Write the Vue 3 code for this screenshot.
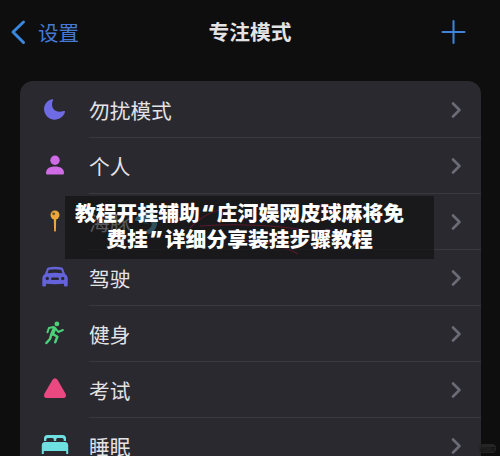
<script setup>
const rows = [
  { name: '勿扰模式', icon: 'moon' },
  { name: '个人', icon: 'person' },
  { name: '海豚', icon: 'pin', emoji: true },
  { name: '驾驶', icon: 'car' },
  { name: '健身', icon: 'run' },
  { name: '考试', icon: 'triangle' },
  { name: '睡眠', icon: 'bed' },
]
</script>

<template>
  <main class="screen">
    <header class="bar">
      <div class="back">
        <svg width="16" height="26" viewBox="0 0 16 26"><path d="M13.500 3 3 13 13.500 23.500" /></svg>
        <span>设置</span>
      </div>
      <h1>专注模式</h1>
      <svg class="plus" width="26" height="26" viewBox="0 0 26 26"><path d="M12.500 2v22M1.500 13h22" /></svg>
    </header>

    <section class="card">
      <div v-for="row in rows" :key="row.name" class="row">
        <svg class="icon" width="30" height="30" viewBox="0 0 30 30">
          <path v-if="row.icon === 'moon'" fill="#6e6be4" d="M12 4.3C3.5 6.4 1.6 16 7.3 21.700c5.700 5.500 15.500 3 17.700-4.600.3-1-.5-1.400-1.400-1C15.500 19 9.500 12.500 13 5.300c.4-.8-.1-1.200-1-1z" />
          <g v-else-if="row.icon === 'person'" fill="#d06be6">
            <circle cx="15" cy="9.300" r="4.700" />
            <path d="M6 22c0-4.500 4-6.500 9-6.500s9 2 9 6.500c0 1-.6 1.600-1.600 1.600H7.600C6.600 23.600 6 23 6 22z" />
          </g>
          <g v-else-if="row.icon === 'pin'" fill="#eaa83a">
            <circle cx="15" cy="8" r="4.500" />
            <path d="M13.800 12h2.400l-.3 11.500-.9 1.800-.9-1.800z" />
            <circle cx="13.700" cy="6.800" r="1.400" fill="#675036" />
          </g>
          <g v-else-if="row.icon === 'car'">
            <path fill="#6563dc" fill-rule="evenodd" d="M8.200 4.600Q15 3 21.800 4.600q1 .3 1.400 1.300l1.900 5.200q2.600 1.500 2.600 4.200v7q0 1.200-1.200 1.200h-1.300q-1.200 0-1.200-1.200v-1.500q-9 .7-18 0v1.500q0 1.200-1.200 1.200H3.500q-1.200 0-1.200-1.200v-7q0-2.700 2.600-4.200l1.900-5.200q.4-1 1.400-1.300zM8.800 6.800 7.500 10.300q7.500-.9 15 0L21.200 6.800Q15 5.800 8.800 6.800z" />
            <circle cx="7.300" cy="15.500" r="1.700" fill="#2a2930" /><circle cx="22.700" cy="15.500" r="1.700" fill="#2a2930" />
            <rect x="11" y="14.500" width="8" height="2.400" rx="1.200" fill="#2a2930" />
          </g>
          <g v-else-if="row.icon === 'run'" fill="none" stroke="#4bd279" stroke-linecap="round" stroke-linejoin="round">
            <circle cx="16.900" cy="4.900" r="2.400" fill="#4bd279" stroke="none" />
            <path stroke-width="2" d="m13.500 8-4.600 1-1.400 4.300M16 10l2.300 3 4.600-2" />
            <path stroke-width="3.800" d="m14.500 9.500-2.200 5.300" />
            <path stroke-width="2.500" d="m12.800 15 4.600 2.800-2.200 5.500M11.300 15.500l-1.300 4.500-3.600 4" />
          </g>
          <path v-else-if="row.icon === 'triangle'" fill="#e94880" d="M12.500 4.800q2.500-3.200 5 0l8.100 14q1.500 4.100-2.500 4.200H6.900q-4-.1-2.500-4.200z" />
          <g v-else fill="#6fe0e2">
            <path d="M4 10V7.500Q4 4 7.500 4h15Q26 4 26 7.500V10h-2.300V8.500q0-1.500-1.500-1.500H17.500q-1.300 0-1.300 1.500V10h-2.400V8.500q0-1.500-1.300-1.500H7.800q-1.500 0-1.500 1.500V10z" />
            <path d="M1.800 23v-8.500Q1.800 11 5 11h20q3.200 0 3.200 3.500V23h-2v-3H3.800v3z" />
          </g>
        </svg>
        <div class="content">
          <span class="label">{{ row.name }}</span>
          <svg v-if="row.emoji" class="dolphin" width="26" height="26" viewBox="0 0 26 26">
            <path fill="#6ccbf0" d="M2 10Q7 2 16 3l4-2-1 4q6 4 5 11-2 7-8 9l-5-2 5-3q5-4 1-8-5-3-12 0-4 0-3-2z" />
            <path fill="#3f80b8" d="M8 10q5 1 7 5l-5-1z" />
          </svg>
          <svg class="chevron" width="12" height="18" viewBox="0 0 12 18"><path d="m3 2.500 6.500 6.500L3 15.500" /></svg>
        </div>
      </div>
    </section>

    <div class="banner">
      <svg class="marks" width="369" height="63" viewBox="0 0 369 63">
        <path d="M125 32q18-19 45-21M135 30q60-4 110 5M175 44q37 2 58 14" />
      </svg>
      <p>教程开挂辅助<i>“</i>庄河娱网皮球麻将免</p>
      <p>费挂<i>”</i>详细分享装挂步骤教程</p>
    </div>
    <div class="tag">创信网</div>
  </main>
</template>

<style>
body { background: #0e0e0e; overflow: hidden; }
</style>

<style scoped>
.screen {
  position: relative;
  width: 500px;
  height: 456px;
  overflow: hidden;
  background: #0e0e0e;
  color: #e3e3e6;
  font-family: "Noto Sans CJK SC", sans-serif;
}
.bar {
  display: grid;
  grid-template-columns: 1fr auto 1fr;
  align-items: center;
  height: 63px;
  padding: 0 33px 0 10px;
  box-sizing: border-box;
}
.back { display: flex; align-items: center; gap: 12px; color: #4679d6; font-size: 20.500px; line-height: 28px; }
.back path { fill: none; stroke: #3788de; stroke-width: 3; stroke-linecap: round; stroke-linejoin: round; }
h1 { margin: 0 0 2px 23px; font-size: 20.700px; line-height: 28px; font-weight: 700; }
.plus { justify-self: end; }
.plus path { stroke: #3f83dc; stroke-width: 2; stroke-linecap: round; }
.card {
  margin: 18px 19px 0 20px;
  height: 400px;
  padding-top: 1px;
  box-sizing: border-box;
  border-radius: 13px 13px 0 0;
  background: #2a2930;
}
.row { display: flex; align-items: center; height: 56px; padding-left: 20px; }
.icon { flex: none; margin-right: 19px; }
.content {
  display: flex;
  align-items: center;
  flex: 1;
  height: 56px;
  padding-right: 19px;
  box-sizing: border-box;
  border-bottom: 1px solid #3a3940;
}
.label { font-size: 20.700px; line-height: 30px; }
.dolphin { margin-left: 3px; }
.chevron { margin-left: auto; }
.chevron path { fill: none; stroke: #6b6b76; stroke-width: 2.600; stroke-linecap: round; stroke-linejoin: round; }
.banner {
  position: absolute;
  left: 65px;
  top: 196px;
  width: 369px;
  height: 63px;
  padding-top: 3px;
  box-sizing: border-box;
  background: rgba(16, 16, 17, 0.660);
}
.banner p {
  position: relative;
  margin: 0;
  padding-right: 20px;
  height: 26px;
  color: #fff;
  font-size: 20.800px;
  line-height: 26px;
  font-weight: 900;
  text-align: center;
  white-space: nowrap;
}
.banner i {
  display: inline-block;
  width: 17px;
  line-height: 20px;
  font-style: normal;
  font-size: 23px;
  font-family: "Noto Sans", sans-serif;
}
.marks { position: absolute; left: 0; top: 0; }
.marks path { fill: none; stroke: #59192b; stroke-width: 1.200; }
.tag {
  position: absolute;
  left: 479px;
  top: 444px;
  width: 17px;
  height: 9px;
  border-radius: 4px;
  background: #252525;
  color: #0b0b0b;
  font-size: 5px;
  line-height: 9px;
  text-align: center;
}
</style>
